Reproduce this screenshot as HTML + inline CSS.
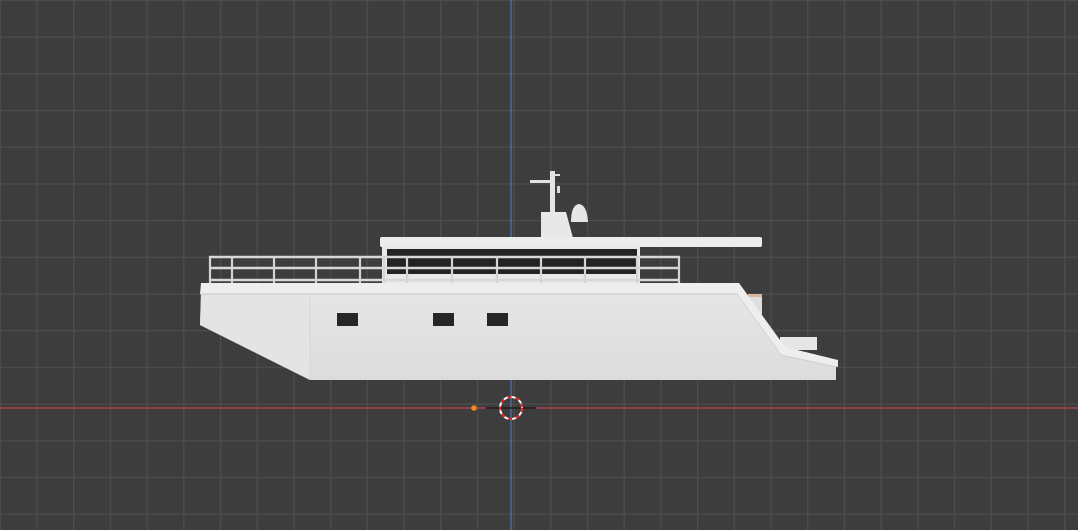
<!DOCTYPE html>
<html><head><style>
html,body{margin:0;padding:0;background:#3d3d3d;width:1078px;height:530px;overflow:hidden}
</style></head><body>
<svg width="1078" height="530" viewBox="0 0 1078 530" xmlns="http://www.w3.org/2000/svg">
<defs>
<pattern id="g" x="-0.3" y="-0.2" width="36.7" height="36.7" patternUnits="userSpaceOnUse">
<path d="M0 0.5H36.7 M0.5 0V36.7" stroke="#4d4d4d" stroke-width="1.5" fill="none"/>
</pattern>
<linearGradient id="h" x1="0" y1="0" x2="0" y2="1">
<stop offset="0" stop-color="#e6e6e6"/><stop offset="1" stop-color="#dcdcdc"/>
</linearGradient>
</defs>
<rect width="1078" height="530" fill="#3d3d3d"/>
<rect width="1078" height="530" fill="url(#g)"/>
<line x1="511" y1="0" x2="511" y2="530" stroke="#5176b3" stroke-width="1.2"/>
<line x1="0" y1="408" x2="1078" y2="408" stroke="#c4404f" stroke-width="1.3"/>

<!-- mast -->
<rect x="550" y="171" width="5" height="42" fill="#e4e4e4"/>
<rect x="530" y="180" width="22" height="3" fill="#e2e2e2"/>
<rect x="554" y="174" width="6" height="2" fill="#e2e2e2"/>
<rect x="557" y="186" width="3" height="7" fill="#dcdcdc"/>
<path d="M541 212H566L573 238H541Z" fill="#e8e8e8"/>
<path d="M571 222Q571 205 579 204Q587 205 588 222Z" fill="#e6e6e6"/>
<!-- cabin -->
<rect x="382" y="247" width="258" height="37" fill="#e8e8e8"/>
<rect x="387" y="249" width="250" height="25" fill="#232323"/>
<rect x="380" y="237" width="382" height="10" rx="2" fill="#ececec"/>
<!-- back bow block -->
<rect x="748" y="294" width="14" height="20" fill="#dedede"/>
<rect x="780" y="337" width="37" height="13" fill="#e6e6e6"/>
<rect x="748" y="294" width="14" height="3" fill="#d9b9a0"/>
<!-- hull -->
<path d="M201 293H740L783 352L836 362V380H310L200 325Z" fill="url(#h)"/>
<path d="M201 293H310V380L200 325Z" fill="#e4e4e4"/>
<line x1="310" y1="293" x2="310" y2="380" stroke="#d6d6d6" stroke-width="1"/>
<!-- deck strip -->
<path d="M201 283H739L785 347L838 360V367L780 355L736 294H200Z" fill="#eeeeee"/>
<line x1="200" y1="294" x2="737" y2="294" stroke="#c8c8c8" stroke-width="1"/>
<path d="M737 294L781 355L836 367" stroke="#cfcfcf" stroke-width="1" fill="none"/>
<!-- windows -->
<rect x="337" y="313" width="21" height="13" fill="#262626"/>
<rect x="433" y="313" width="21" height="13" fill="#262626"/>
<rect x="487" y="313" width="21" height="13" fill="#262626"/>
<!-- railing -->
<g stroke="#d8d8d8" stroke-width="2.4" fill="none">
<line x1="209" y1="257" x2="680" y2="257"/>
<line x1="209" y1="268" x2="680" y2="268"/>
<line x1="209" y1="280" x2="680" y2="280"/>
</g>
<g stroke="#d4d4d4" stroke-width="2.2">
<line x1="210" y1="256" x2="210" y2="283"/><line x1="232" y1="256" x2="232" y2="283"/>
<line x1="274" y1="256" x2="274" y2="283"/><line x1="316" y1="256" x2="316" y2="283"/>
<line x1="360" y1="256" x2="360" y2="283"/><line x1="384" y1="256" x2="384" y2="283"/>
<line x1="407" y1="256" x2="407" y2="283"/><line x1="452" y1="256" x2="452" y2="283"/>
<line x1="497" y1="256" x2="497" y2="283"/><line x1="541" y1="256" x2="541" y2="283"/>
<line x1="585" y1="256" x2="585" y2="283"/><line x1="637" y1="256" x2="637" y2="283"/>
<line x1="679" y1="256" x2="679" y2="283"/>
</g>
<!-- 3D cursor -->
<line x1="486" y1="408" x2="536" y2="408" stroke="#111" stroke-width="1.3"/>
<circle cx="511" cy="408" r="11" fill="none" stroke="#fff" stroke-width="2"/>
<circle cx="511" cy="408" r="11" fill="none" stroke="#d22" stroke-width="2" stroke-dasharray="4 4"/>
<circle cx="474" cy="408" r="2.8" fill="#f08a1a"/>
</svg>
</body></html>
